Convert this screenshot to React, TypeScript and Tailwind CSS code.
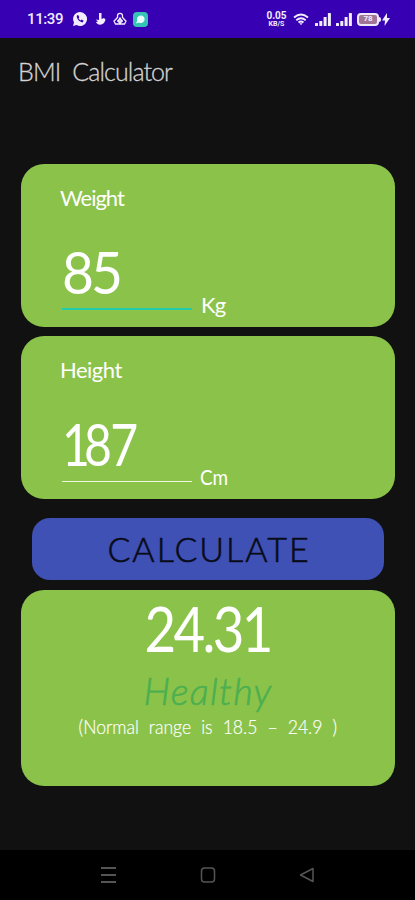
import type { ReactNode } from "react";

function StatusBar() {
  return (
    <header className="flex h-[38px] items-center bg-[#3700b3] pl-[27px] pr-[25px] text-[#f1ecff]">
      <span className="w-[36px] whitespace-nowrap font-['Roboto',sans-serif] text-[15px] font-medium leading-none tracking-[-0.4px]">11:39</span>
      <svg className="ml-[9px] h-[16px] w-[16px]" viewBox="0 0 16 16">
        <path d="M8 1a7 7 0 1 1-3.400 13.100L1 15l1-3.500A7 7 0 0 1 8 1Z" fill="currentColor" />
        <path d="M5 4.300c-1.200 2.700 2.400 6.700 5.600 7.200l1-1.700-2-1.200-1 .8C7.700 8.900 7 8.200 6.500 7.200l.8-.9-.9-2Z" fill="#3700b3" />
      </svg>
      <svg className="ml-[7px] h-[14px] w-[11px]" viewBox="0 0 11 14">
        <path d="M4 1h2.500v6L9 6l1.500 1.500C10 10.500 8 12.500 5 12.700 2.800 12.500 1.600 11.500 1 10l2-.5L.6 7.500 4 8Z" fill="currentColor" />
      </svg>
      <svg className="ml-[7px] h-[14px] w-[14px]" viewBox="0 0 14 14" fill="none" stroke="currentColor" strokeWidth="1.300">
        <path d="M4.500 5.500V3.800a2.500 2.500 0 0 1 5 0v1.700L13 9.200 11.500 12h-9L1 9.200ZM4 9h6M5 9l2-3 2 3-2 2.500Z" />
      </svg>
      <svg className="ml-[6px] h-[15px] w-[15px]" viewBox="0 0 15 15">
        <rect width="15" height="15" rx="4" fill="#35c4b5" />
        <path d="M7.800 3.500a3.800 3.800 0 1 1-2 7L3 11.500l1.200-2.700a3.800 3.800 0 0 1 3.600-5.300Z" fill="#e9fffb" />
      </svg>
      <div className="ml-auto flex w-[21px] flex-col items-center whitespace-nowrap font-['Roboto',sans-serif] font-bold">
        <span className="text-[10px] leading-[9px]">0.05</span>
        <span className="text-[7px] leading-[8px]">KB/S</span>
      </div>
      <svg className="ml-[6px] h-[13px] w-[16px]" viewBox="0 0 16 13" fill="none" stroke="currentColor" strokeWidth="1.800">
        <path d="M1 4.500Q8-1.500 15 4.500M3.300 7.200q4.700-4 9.400 0M5.500 9.500q2.500-2 5 0" />
        <path d="m6.500 10.200 1.500 2 1.500-2Z" fill="currentColor" stroke="none" />
      </svg>
      <Signal className="ml-[6px]" />
      <Signal className="ml-[5px]" />
      <div className="ml-[5px] flex items-center">
        <div className="flex h-[13px] w-[22px] items-center justify-center rounded-[4px] border-2 border-[#efe8ff] bg-[#a17596] font-['Roboto',sans-serif] text-[8px] font-bold leading-none">78</div>
        <div className="h-[5px] w-[2px] rounded-r-sm bg-[#efe8ff]" />
        <svg className="ml-px h-[13px] w-[8px]" viewBox="0 0 8 13"><path d="M5 0 0 7.500h3L2.500 13 8 5H5Z" fill="currentColor" /></svg>
      </div>
    </header>
  );
}

function Signal({ className }: { className: string }) {
  return (
    <svg className={`${className} h-[13px] w-[16px]`} viewBox="0 0 16 13" fill="currentColor">
      <rect y="10" width="3" height="3" rx=".5" />
      <rect x="4.300" y="8" width="3" height="5" rx=".5" />
      <rect x="8.600" y="4" width="3" height="9" rx=".5" />
      <rect x="12.900" width="3" height="13" rx=".5" />
    </svg>
  );
}

function InputCard({ label, children, unit, line }: { label: ReactNode; children: ReactNode; unit: ReactNode; line: string }) {
  return (
    <section className="h-[163px] rounded-[23px] bg-[#8bc34a] pl-[39px] pt-[20px] text-white">
      <h2 className="h-[28px] text-[22px] leading-[28px]">{label}</h2>
      <div className="mt-[26px] flex items-start">
        <div className="flex h-[73px] w-[132px] flex-col pl-[2px]">
          <div className="h-[70px] whitespace-nowrap text-[58px] leading-[68px]">{children}</div>
          <div className={line} />
        </div>
        <span className="mt-[52px] text-[22px] leading-[30px]">{unit}</span>
      </div>
    </section>
  );
}

export default function App() {
  return (
    <main className="flex h-[900px] w-[415px] flex-col overflow-hidden bg-[#111] font-['Lato',sans-serif]">
      <StatusBar />
      <h1 className="ml-[18px] mt-[17px] h-[32px] whitespace-nowrap text-[25px] font-light leading-[32px] tracking-[-0.9px] text-[#d4d4d4] [-webkit-text-stroke:0.3px_#d4d4d4] [word-spacing:6px]">BMI Calculator</h1>
      <div className="mx-[21px] mt-[77px] flex w-[374px] flex-col">
        <InputCard label={<span className="tracking-[-1px]">Weight</span>} unit={<span className="ml-[9px] tracking-[-0.8px]">Kg</span>} line="h-[2px] w-[130px] bg-[#20ccaa]">
          <span className="inline-block origin-left scale-x-[0.95] tracking-[-3px]">85</span>
        </InputCard>
        <div className="h-[9px]" />
        <InputCard label={<span className="tracking-[-0.5px]">Height</span>} unit={<span className="ml-[8px] inline-block origin-left scale-x-[0.86]">Cm</span>} line="mt-px h-px w-[130px] bg-[#edf8df]">
          <span className="inline-block origin-left scale-x-[0.83]"><span className="tracking-[-7px]">1</span><span className="tracking-[-2px]">87</span></span>
        </InputCard>
        <button className="mx-[11px] mt-[19px] h-[62px] rounded-[18px] bg-[#3f51b5] text-[34px] font-light leading-[62px] tracking-[2px] text-[#080b18] [-webkit-text-stroke:0.6px_#080b18]"><span className="inline-block pl-[2px]">CALCULATE</span></button>
        <section className="mt-[10px] flex h-[196px] flex-col items-center rounded-[23px] bg-[#8bc34a] text-white">
          <div className="mt-[3px] h-[70px] whitespace-nowrap text-[62px] leading-[70px] tracking-[-3px]"><span className="inline-block scale-x-[0.88]">24.31</span></div>
          <div className="mt-[6px] h-[42px] text-[38px] font-light italic leading-[42px] tracking-[1.2px] text-[#4caf50] [-webkit-text-stroke:0.6px_#4caf50]">Healthy</div>
          <p className="mt-[2px] whitespace-pre text-[20px] font-light leading-[26px] [-webkit-text-stroke:0.2px_white] [word-spacing:6px]"><span className="inline-block scale-x-[0.88]">(Normal range is 18.5 – 24.9 )</span></p>
        </section>
      </div>
      <nav className="mt-auto flex h-[50px] items-center bg-black text-[#555]">
        <svg className="ml-[101px] h-[16px] w-[16px]" viewBox="0 0 16 16" stroke="currentColor" strokeWidth="2"><path d="M0 1h15M0 8h15M0 15h15" /></svg>
        <svg className="ml-[83px] h-[16px] w-[16px]" viewBox="0 0 16 16" fill="none" stroke="currentColor" strokeWidth="1.500"><rect x="1.500" y="1" width="13" height="14" rx="3" /></svg>
        <svg className="ml-[83px] h-[16px] w-[16px]" viewBox="0 0 16 16" fill="none" stroke="currentColor" strokeWidth="1.500" strokeLinejoin="round"><path d="M14 1.500v13L1.500 8Z" /></svg>
      </nav>
    </main>
  );
}
